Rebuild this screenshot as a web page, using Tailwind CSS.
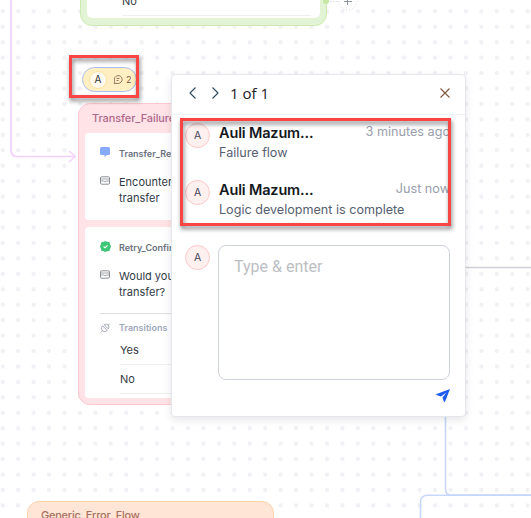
<!DOCTYPE html>
<html lang="en">
<head>
<meta charset="utf-8">
<title>Flow comments</title>
<script src="https://cdn.jsdelivr.net/npm/@tailwindcss/browser@4"></script>
</head>
<body class="bg-white">
<main class="relative w-[531px] h-[518px] overflow-hidden bg-white font-['Inter',sans-serif] text-[#333a47]">

  <!-- Canvas grid and connectors -->
  <svg class="absolute inset-0" width="531" height="518" viewBox="0 0 531 518" fill="none">
    <defs>
      <pattern id="dots" x="-5" y="3.6" width="15.44" height="15.44" patternUnits="userSpaceOnUse">
        <circle cx="7.72" cy="7.72" r="2.1" fill="#f0f0f5"/>
      </pattern>
    </defs>
    <rect width="531" height="518" fill="url(#dots)"/>
    <path d="M11 0V150Q11 156.500 17 156.500H74" stroke="#f3d0fd" stroke-width="1.700"/>
    <path d="M69 151L75.500 156.500L69 162" stroke="#f3d0fd" stroke-width="1.300"/>
    <path d="M465 267.500H531" stroke="#d0d0d5" stroke-width="1.500"/>
    <path d="M445.500 410V489Q445.500 495 451 495H531" stroke="#c7d7fb" stroke-width="1.600"/>
    <path d="M420.500 518V502Q420.500 495.300 428 495.300H531" stroke="#c7d7fb" stroke-width="1.600"/>
    <path d="M330 1.500H340" stroke="#e4e4e8" stroke-dasharray="2 1"/>
    <circle cx="348" cy="1" r="9" stroke="#d9d9df" stroke-dasharray="1 2"/>
    <path d="M344 1.500H352M347.500 -3V5" stroke="#8d92a3"/>
  </svg>

  <!-- Upper node -->
  <section class="absolute left-[80px] top-[-30px] w-[247px] h-[56px] rounded-[12px] border border-[#cdebb0] bg-[#e3f4d6] px-[6px] pb-[7px]">
    <div class="h-full rounded-b-[5px] bg-white pl-[35px] pr-[9px] pt-[20px]">
      <div class="h-[25px] border-b border-[#eeeef1] text-[11px] leading-[20px]">No</div>
    </div>
  </section>
  <i class="absolute left-[323px] top-[-2px] size-[6px] rounded-full bg-[#c5e8a2]"></i>

  <!-- Transfer node -->
  <section class="absolute left-[78px] top-[103px] w-[247px] h-[302px] rounded-[12px] border border-[#fcc9d2] bg-[#ffe3e7] px-[6px]">
    <h2 class="h-[29px] pl-[7px] pt-[4px] text-[11px] leading-[20px] font-medium tracking-[-0.1px] text-[#b0678a]">Transfer_Failure</h2>
    <div class="h-[87px] rounded-[4px] bg-white pt-[12px] pl-[15px]">
      <div class="flex items-center gap-[9px] h-[18px]">
        <svg width="10" height="10" viewBox="0 0 10 10" class="mb-[4px]"><path d="M1.500 0H8.500Q10 0 10 1.500V6.500Q10 8 8.500 8H7L4.500 10V8H1.500Q0 8 0 6.500V1.500Q0 0 1.500 0Z" fill="#86aaff"/></svg>
        <b class="text-[9px] font-semibold text-[#697180]">Transfer_Re</b>
      </div>
      <div class="flex gap-[9px] pt-[11px]">
        <svg width="10" height="10" viewBox="0 0 10 10" class="mt-[2px]" fill="none" stroke="#8c8f96"><rect x=".5" y=".8" width="9" height="7.400" rx="1.200"/><path d="M.5 3H9.500M.5 5H3.500Q5 6.300 6.500 5H9.500" stroke-width=".8"/></svg>
        <p class="text-[11px] leading-[16px] whitespace-nowrap">Encounter<br>transfer</p>
      </div>
    </div>
    <div class="mt-[7px] h-[171px] rounded-[4px] bg-white pt-[12px] pl-[15px]">
      <div class="flex items-center gap-[9px] h-[18px]">
        <svg width="11" height="11" viewBox="0 0 10 10" class="mb-[3px] -mr-px"><path d="M5 0L6.500 .6L8.500 1L9.200 3L10 5L9.200 7L8.500 9L6.500 9.400L5 10L3.500 9.400L1.500 9L.8 7L0 5L.8 3L1.500 1L3.500 .6Z" fill="#3fc678"/><path d="M3.300 5L4.600 6.200L6.900 3.900" fill="none" stroke="#fff"/></svg>
        <b class="text-[9px] font-semibold text-[#697180]">Retry_Confir</b>
      </div>
      <div class="flex gap-[9px] pt-[11px]">
        <svg width="10" height="10" viewBox="0 0 10 10" class="mt-[2px]" fill="none" stroke="#8c8f96"><rect x=".5" y=".8" width="9" height="7.400" rx="1.200"/><path d="M.5 3H9.500M.5 5H3.500Q5 6.300 6.500 5H9.500" stroke-width=".8"/></svg>
        <p class="text-[11px] leading-[16px] whitespace-nowrap">Would you<br>transfer?</p>
      </div>
      <div class="mt-[13px] border-t border-[#dddde2] flex items-center gap-[9px] h-[29px]">
        <svg width="10" height="10" viewBox="0 0 10 10" fill="none" stroke="#969baa" stroke-width=".85"><path d="M2.600 2.800L7.200 7.400C5.800 8.900 3.800 9 2.500 7.800C1.200 6.500 1.200 4.300 2.600 2.800ZM2.500 7.800L.8 9.500M4.200 1.800L8.200 5.800C9.200 4.600 9.100 3.200 8.100 2.100C7 1 5.400 .9 4.200 1.800M8.100 2.100L9.700 .5"/></svg>
        <b class="text-[9px] font-semibold text-[#a0a7bb]">Transitions</b>
      </div>
      <div class="ml-[20px] h-[23px] border-b border-[#eeeef1] text-[11px] leading-[16px]">Yes</div>
      <div class="ml-[20px] h-[29px] border-b border-[#eeeef1] pt-[6px] text-[11px] leading-[16px]">No</div>
    </div>
  </section>

  <!-- Error node -->
  <section class="absolute left-[27px] top-[501px] w-[247px] h-[60px] rounded-[12px] border border-[#fbd3aa] bg-[#ffe5d6] pl-[13px] pt-[3px]">
    <h2 class="text-[11px] leading-[20px] font-medium tracking-[-0.25px] text-[#aa705f]">Generic_Error_Flow</h2>
  </section>

  <!-- Comment badge -->
  <div class="absolute left-[82px] top-[67px] w-[55px] h-[25px] rounded-full border border-[#a9bff0] bg-[#ffefc3] flex items-center pl-[6px] text-[#7b5848]">
    <span class="size-[18px] rounded-full border border-[#ffe2a0] bg-[#fff9ee] flex items-center justify-center text-[10px] text-[#343434]">A</span>
    <svg class="ml-[6px]" width="10" height="9" viewBox="0 0 10 9" fill="none" stroke="currentColor" stroke-width=".8"><path d="M1 8.400H5.200A3.900 3.900 0 1 0 1.500 5.600C1.700 6.600 1.700 7.300 1 8.400ZM3.500 3.500H6.500M3.500 5.500H5.500"/></svg>
    <span class="ml-[3px] text-[9px]">2</span>
  </div>

  <!-- Comments popup -->
  <section class="absolute left-[171px] top-[74px] w-[295px] h-[343px] rounded-[4px] border border-[#e6e7ec] bg-white shadow-[0_3px_8px_rgba(0,0,0,0.10)]">
    <header class="h-[40px] border-b border-[#edf0f5] flex items-center pl-[17px] pr-[15px]">
      <svg width="7" height="12" viewBox="0 0 7 12" class="-mt-[4px]" fill="none" stroke="#2c4560" stroke-width="1.100"><path d="M6.500 .5L1 6L6.500 11.500"/></svg>
      <svg width="7" height="12" viewBox="0 0 7 12" class="ml-[16px] -mt-[4px]" fill="none" stroke="#2c4560" stroke-width="1.100"><path d="M.5 .5L6 6L.5 11.500"/></svg>
      <span class="ml-[11px] -mt-[4px] font-['Open_Sans'] text-[15px] leading-[20px] text-[#202027]">1 of 1</span>
      <svg width="10" height="10" viewBox="0 0 10 10" class="ml-auto -mt-[4px]" fill="none" stroke="#80543d" stroke-width="1.100"><path d="M.5 .5L9.500 9.500M9.500 .5L.5 9.500"/></svg>
    </header>
    <div class="flex flex-col pl-[13px] pr-[15px]">
      <article class="flex h-[57px] pt-[8px]">
        <span class="size-[25px] shrink-0 rounded-full border border-[#ffc8c8] bg-[#fff0f0] flex items-center justify-center text-[10.500px] text-[#404655]">A</span>
        <div class="ml-[9px] flex-1">
          <div class="flex justify-between leading-[20px] whitespace-nowrap"><b class="text-[14.500px] font-semibold tracking-[-0.15px] text-[#141821]">Auli Mazum...</b><time class="-mt-px text-[12.650px] text-[#999ead]">3 minutes ago</time></div>
          <p class="text-[12.600px] leading-[20px] text-[#566070]">Failure flow</p>
        </div>
      </article>
      <article class="flex h-[57px] pt-[8px]">
        <span class="size-[25px] shrink-0 rounded-full border border-[#ffc8c8] bg-[#fff0f0] flex items-center justify-center text-[10.500px] text-[#404655]">A</span>
        <div class="ml-[9px] flex-1">
          <div class="flex justify-between leading-[20px] whitespace-nowrap"><b class="text-[14.500px] font-semibold tracking-[-0.15px] text-[#141821]">Auli Mazum...</b><time class="-mt-px text-[12.650px] text-[#999ead]">Just now</time></div>
          <p class="text-[12.600px] leading-[20px] text-[#566070]">Logic development is complete</p>
        </div>
      </article>
      <div class="flex pt-[16px]">
        <span class="size-[25px] shrink-0 rounded-full border border-[#ffc8c8] bg-[#fff0f0] flex items-center justify-center text-[10.500px] text-[#404655]">A</span>
        <div class="ml-[8px] w-[232px] h-[135px] rounded-[8px] border border-[#cdd1dc] px-[15px] pt-[10px] font-['Roboto'] text-[16px] leading-[22px] text-[#bcbec4]">Type &amp; enter</div>
      </div>
      <svg class="mt-[9px] ml-auto" width="14" height="13" viewBox="0 0 14 13" fill="#1b5cf0"><path d="M14 0L0 5.300L.5 6L5 7.500L10.500 3.500L6.500 8.500L8 13L9 12.800Z"/></svg>
    </div>
  </section>

  <!-- Highlight frames -->
  <div class="absolute left-[69px] top-[55px] w-[70px] h-[43px] border-[3px] border-[#fa4545] drop-shadow-[1px_3px_2px_rgba(0,0,0,0.5)]"></div>
  <div class="absolute left-[180px] top-[118px] w-[271px] h-[108px] border-[3px] border-[#fa4545] drop-shadow-[1px_3px_2px_rgba(0,0,0,0.5)]"></div>
</main>
</body>
</html>
